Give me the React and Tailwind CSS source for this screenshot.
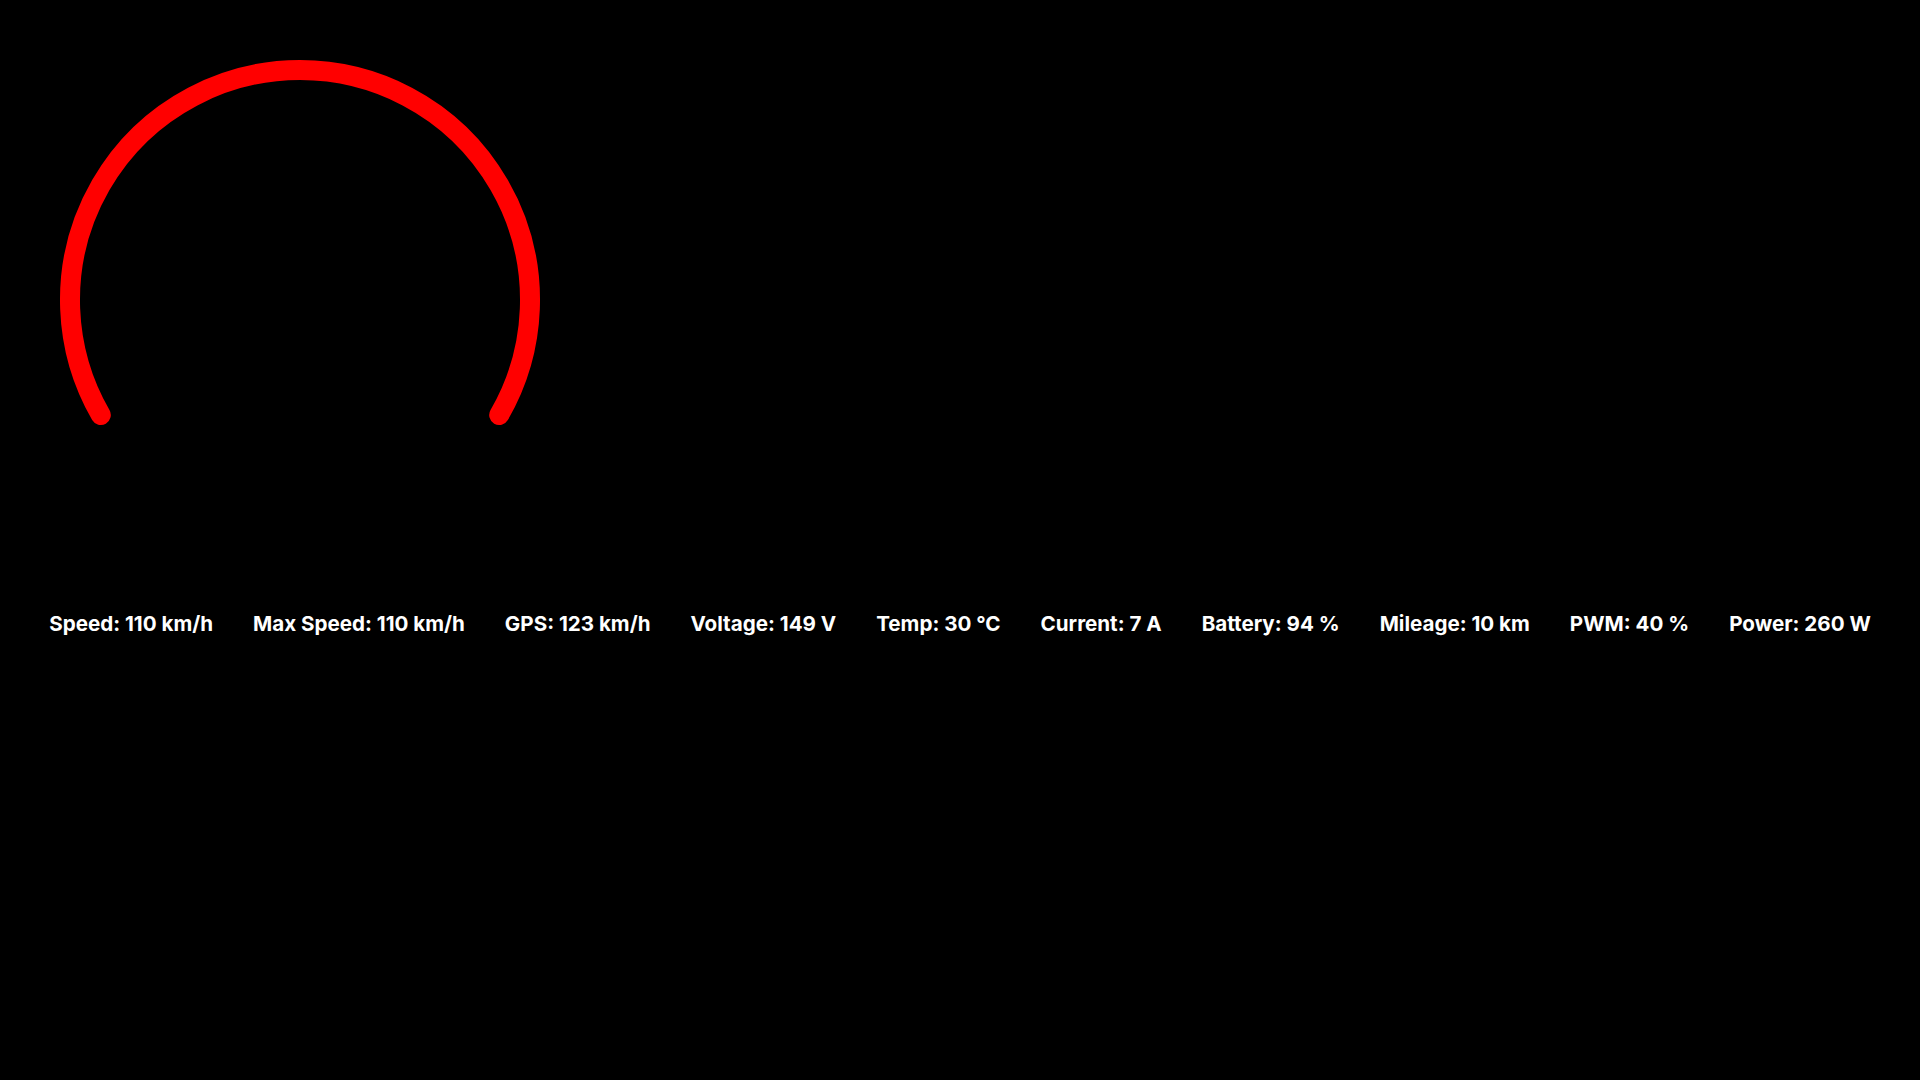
import React from 'react';

// Telemetria da roda (valores fixos)
const stats = [
    { label: 'Speed', value: '110 km/h' },
    { label: 'Max Speed', value: '110 km/h' },
    { label: 'GPS', value: '123 km/h' },
    { label: 'Voltage', value: '149 V' },
    { label: 'Temp', value: '30 °C' },
    { label: 'Current', value: '7 A' },
    { label: 'Battery', value: '94 %' },
    { label: 'Mileage', value: '10 km' },
    { label: 'PWM', value: '40 %' },
    { label: 'Power', value: '260 W' },
];

const Gauge = () => (
    <svg width="600" height="600" viewBox="0 0 600 600" className="block">
        {/* arco de 240°, de 150° a 30° passando pelo topo */}
        <path
            d="M 100.81 415 A 230 230 0 1 1 499.19 415"
            fill="none"
            stroke="#ff0000"
            strokeWidth="20"
            strokeLinecap="round"
        />
    </svg>
);

const App = () => {
    return (
        <div className="min-h-screen w-full bg-black text-white font-['Inter',sans-serif]">
            <Gauge />
            <div className="mt-[10px] flex justify-center gap-10 text-[20.6px] leading-7 font-bold">
                {stats.map(s => (
                    <span key={s.label} className="whitespace-nowrap">{s.label}: {s.value}</span>
                ))}
            </div>
        </div>
    );
};

export default App;
